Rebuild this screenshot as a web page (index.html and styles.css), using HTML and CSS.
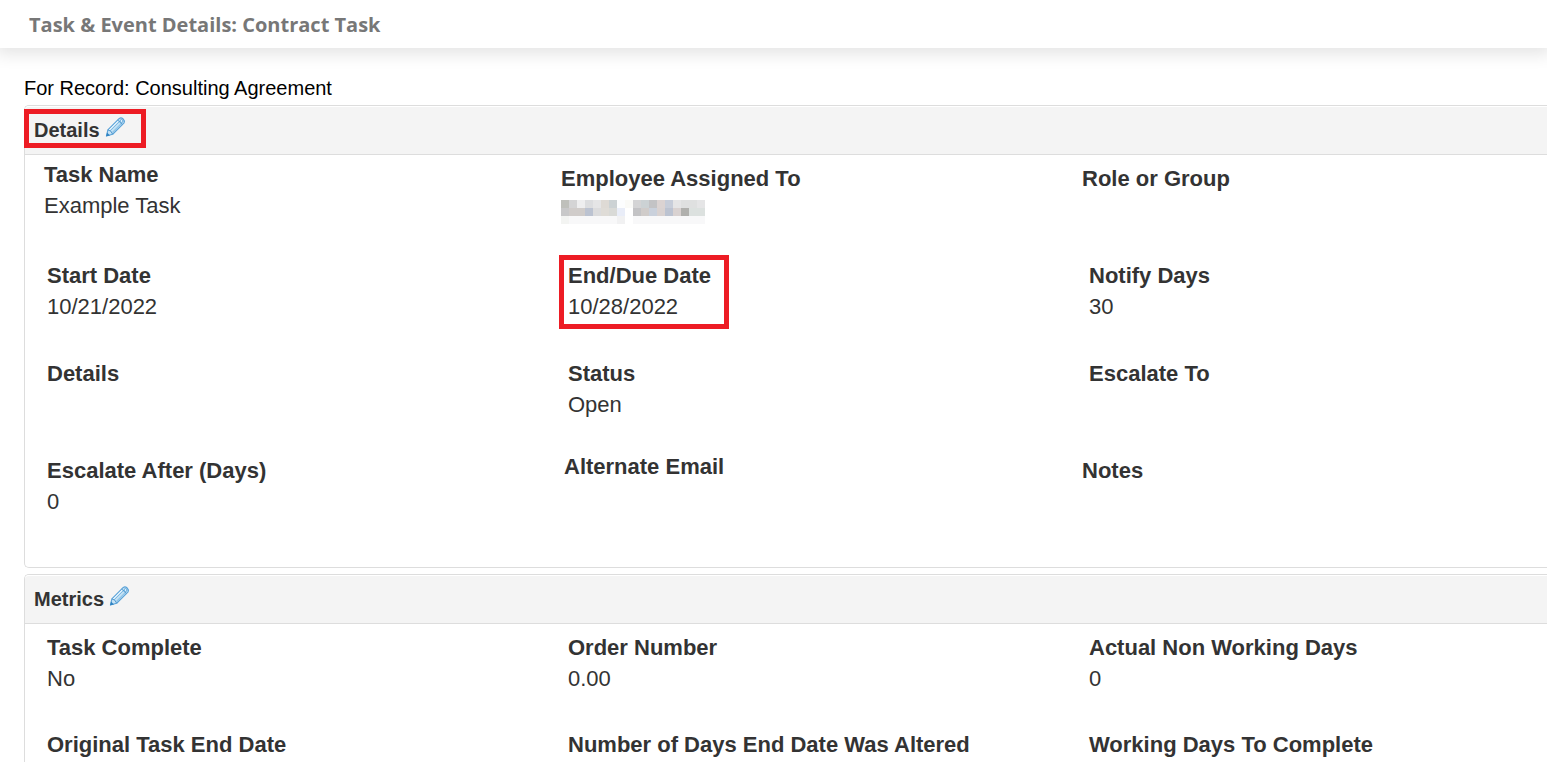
FILE: index.html
```html
<!DOCTYPE html>
<html lang="en">
<head>
<meta charset="utf-8">
<title>Task &amp; Event Details: Contract Task</title>
<link rel="stylesheet" href="styles.css">
</head>
<body>
<svg class="defs" aria-hidden="true">
  <symbol id="pencil" viewBox="0 0 22 22">
    <path d="M1.5 20.5 L3 14 L15 2 Q17 .8 19 2.6 Q21 4.6 20 6.6 L8 18.6 Z" fill="#c5e2f5" stroke="#5ba3d8" stroke-width="1.2" stroke-linejoin="round"/>
    <path d="M5.5 15 L16 4.5 M7.5 16.8 L18 6.3" stroke="#74b4e0" stroke-width="1" fill="none"/>
    <path d="M4.4 14.2 L14.5 4.1" stroke="#f1f9ff" stroke-width="1" fill="none"/>
    <path d="M13.4 3.8 L18.2 8.4 M3 14 Q6.8 14.5 8 18.6" stroke="#4b94cc" stroke-width="1" fill="none"/>
    <path d="M1.2 20.8 L2.2 16.8 L5.2 19.8 Z" fill="#2f83c2"/>
    <circle cx="17.3" cy="4.7" r="1.5" fill="#e4f3fd" stroke="#4b9ad3" stroke-width=".8"/>
  </symbol>
</svg>
<header class="page-header">
  <h1 class="page-title">Task &amp; Event Details: Contract Task</h1>
</header>
<main class="content">
  <p class="record">For Record: Consulting Agreement</p>

  <section class="panel">
    <div class="panel-head">
      <div class="panel-label marked">
        <h2 class="panel-title">Details</h2>
        <button class="edit" type="button" aria-label="Edit Details"><svg class="icon"><use href="#pencil"/></svg></button>
      </div>
    </div>
    <div class="panel-body">
      <dl class="row row-first">
        <div class="field"><dt>Task Name</dt><dd>Example Task</dd></div>
        <div class="field"><dt>Employee Assigned To</dt>
          <dd><svg class="redacted" viewBox="0 0 18 3" shape-rendering="crispEdges" role="img" aria-label="Hidden name">
            <path fill="#bfc0bb" d="M0 0h1v1h-1z"/><path fill="#d4d4d5" d="M1 0h1v1h-1zM9 0h1v1h-1z"/><path fill="#eeeeef" d="M2 0h1v1h-1z"/><path fill="#dcdddf" d="M3 0h1v1h-1z"/><path fill="#e5e5e6" d="M4 0h1v1h-1zM14 0h1v1h-1zM17 0h1v1h-1z"/><path fill="#dedad5" d="M5 0h1v1h-1z"/><path fill="#ccd2d4" d="M6 0h1v1h-1zM10 0h1v1h-1z"/><path fill="#fcfdfe" d="M7 0h1v1h-1z"/><path fill="#fafaf7" d="M8 0h1v1h-1z"/><path fill="#c3c3c5" d="M11 0h1v1h-1zM9 1h1v1h-1z"/><path fill="#dbd3d2" d="M12 0h1v1h-1z"/><path fill="#c7cdd9" d="M13 0h1v1h-1z"/><path fill="#dfe0e0" d="M15 0h2v1h-2z"/>
            <path fill="#c8c8c9" d="M0 1h1v1h-1z"/><path fill="#d0ccca" d="M1 1h2v1h-2zM10 1h1v1h-1z"/><path fill="#bcc3d1" d="M3 1h1v1h-1zM13 1h1v1h-1z"/><path fill="#dcdcdd" d="M4 1h1v1h-1z"/><path fill="#dfdcd7" d="M5 1h1v1h-1z"/><path fill="#d9dad7" d="M6 1h1v1h-1z"/><path fill="#e9edf8" d="M7 1h1v1h-1z"/><path fill="#cad1dc" d="M11 1h1v1h-1z"/><path fill="#d9d2d1" d="M12 1h1v1h-1zM14 1h1v1h-1z"/><path fill="#b0b0ad" d="M15 1h1v1h-1z"/><path fill="#dce1df" d="M16 1h2v1h-2z"/>
            <path fill="#f3f4f2" d="M0 2h1v1h-1z"/><path fill="#f8f8f9" d="M1 2h6v1h-6zM9 2h9v1h-9z"/><path fill="#f1f1f2" d="M7 2h1v1h-1z"/>
          </svg></dd></div>
        <div class="field"><dt>Role or Group</dt><dd></dd></div>
      </dl>
      <dl class="row row-dates">
        <div class="field"><dt>Start Date</dt><dd>10/21/2022</dd></div>
        <div class="field"><div class="marked marked-field"><dt>End/Due Date</dt><dd>10/28/2022</dd></div></div>
        <div class="field"><dt>Notify Days</dt><dd>30</dd></div>
      </dl>
      <dl class="row">
        <div class="field"><dt>Details</dt><dd></dd></div>
        <div class="field"><dt>Status</dt><dd>Open</dd></div>
        <div class="field"><dt>Escalate To</dt><dd></dd></div>
      </dl>
      <dl class="row row-last">
        <div class="field"><dt>Escalate After (Days)</dt><dd>0</dd></div>
        <div class="field"><dt>Alternate Email</dt><dd></dd></div>
        <div class="field"><dt>Notes</dt><dd></dd></div>
      </dl>
    </div>
  </section>

  <section class="panel panel-open">
    <div class="panel-head">
      <div class="panel-label">
        <h2 class="panel-title">Metrics</h2>
        <button class="edit" type="button" aria-label="Edit Metrics"><svg class="icon"><use href="#pencil"/></svg></button>
      </div>
    </div>
    <div class="panel-body">
      <dl class="row">
        <div class="field"><dt>Task Complete</dt><dd>No</dd></div>
        <div class="field"><dt>Order Number</dt><dd>0.00</dd></div>
        <div class="field"><dt>Actual Non Working Days</dt><dd>0</dd></div>
      </dl>
      <dl class="row row-labels">
        <div class="field"><dt>Original Task End Date</dt></div>
        <div class="field"><dt>Number of Days End Date Was Altered</dt></div>
        <div class="field"><dt>Working Days To Complete</dt></div>
      </dl>
    </div>
  </section>
</main>
</body>
</html>
```
FILE: styles.css
```css
* { box-sizing: border-box; }
body {
  display: flex;
  flex-direction: column;
  min-height: 100vh;
  margin: 0;
  background: #fff;
  color: #333;
  font-family: "Liberation Sans", Arial, sans-serif;
  font-size: 22px;
  line-height: 31px;
}
h1, h2, p, dl, dd { margin: 0; }
.defs { display: none; }
.page-header {
  display: flex;
  align-items: center;
  height: 48px;
  padding: 2px 29px 0;
  box-shadow: 0 2px 16px 4px rgba(0, 0, 0, .11);
}
.page-title {
  color: #777;
  font: bold 20px/28px "Open Sans", sans-serif;
}
.content {
  display: flex;
  flex-direction: column;
  flex: 1;
  padding: 28px 0 0 24px;
}
.record {
  color: #000;
  font-size: 20px;
  line-height: 24px;
  margin-bottom: 5px;
}
.panel {
  border: 1px solid #ddd;
  border-right: 0;
  border-radius: 5px 0 0 5px;
  margin-bottom: 6px;
}
.panel-open {
  flex: 1;
  border-bottom: 0;
  border-bottom-left-radius: 0;
  margin-bottom: 0;
}
.panel-head {
  display: flex;
  align-items: flex-start;
  height: 49px;
  padding-top: 2px;
  background: #f4f4f4;
  border-bottom: 1px solid #ddd;
  border-top: 1px solid #fff;
  border-top-left-radius: 4px;
}
.panel-label {
  display: flex;
  align-items: center;
  gap: 5px;
  height: 39px;
  padding: 0 10px;
  margin-left: -1px;
}
.marked { border: 5px solid #ed1c24; }
.panel-label.marked { padding: 0 15px 0 5px; }
.panel-title {
  font-size: 20px;
  line-height: 24px;
  padding-top: 2px;
}
.edit {
  display: flex;
  padding: 0 0 4px;
  border: 0;
  background: none;
  cursor: pointer;
}
.icon { width: 21px; height: 22px; }
.panel-body { padding: 8px 0 15px; }
.row {
  display: grid;
  grid-template-columns: 521fr 521fr 458fr;
  min-height: 97px;
  padding-left: 22px;
}
.row-first {
  grid-template-columns: 517fr 521fr 465fr;
  padding-left: 19px;
}
.row-first .field:first-child { margin-top: -4px; }
.row-dates { min-height: 98px; }
.row-last { grid-template-columns: 517fr 518fr 465fr; }
.row-last .field:nth-child(2) { margin-top: -4px; }
.row-labels { min-height: 31px; }
.panel-open .panel-body { padding-bottom: 0; }
.field dt { font-weight: bold; }
.redacted {
  display: block;
  width: 144px;
  height: 30px;
  padding-top: 6px;
}
.marked-field {
  width: max-content;
  margin: -5px 0 0 -9px;
  padding: 0 13px 2px 4px;
}
```
